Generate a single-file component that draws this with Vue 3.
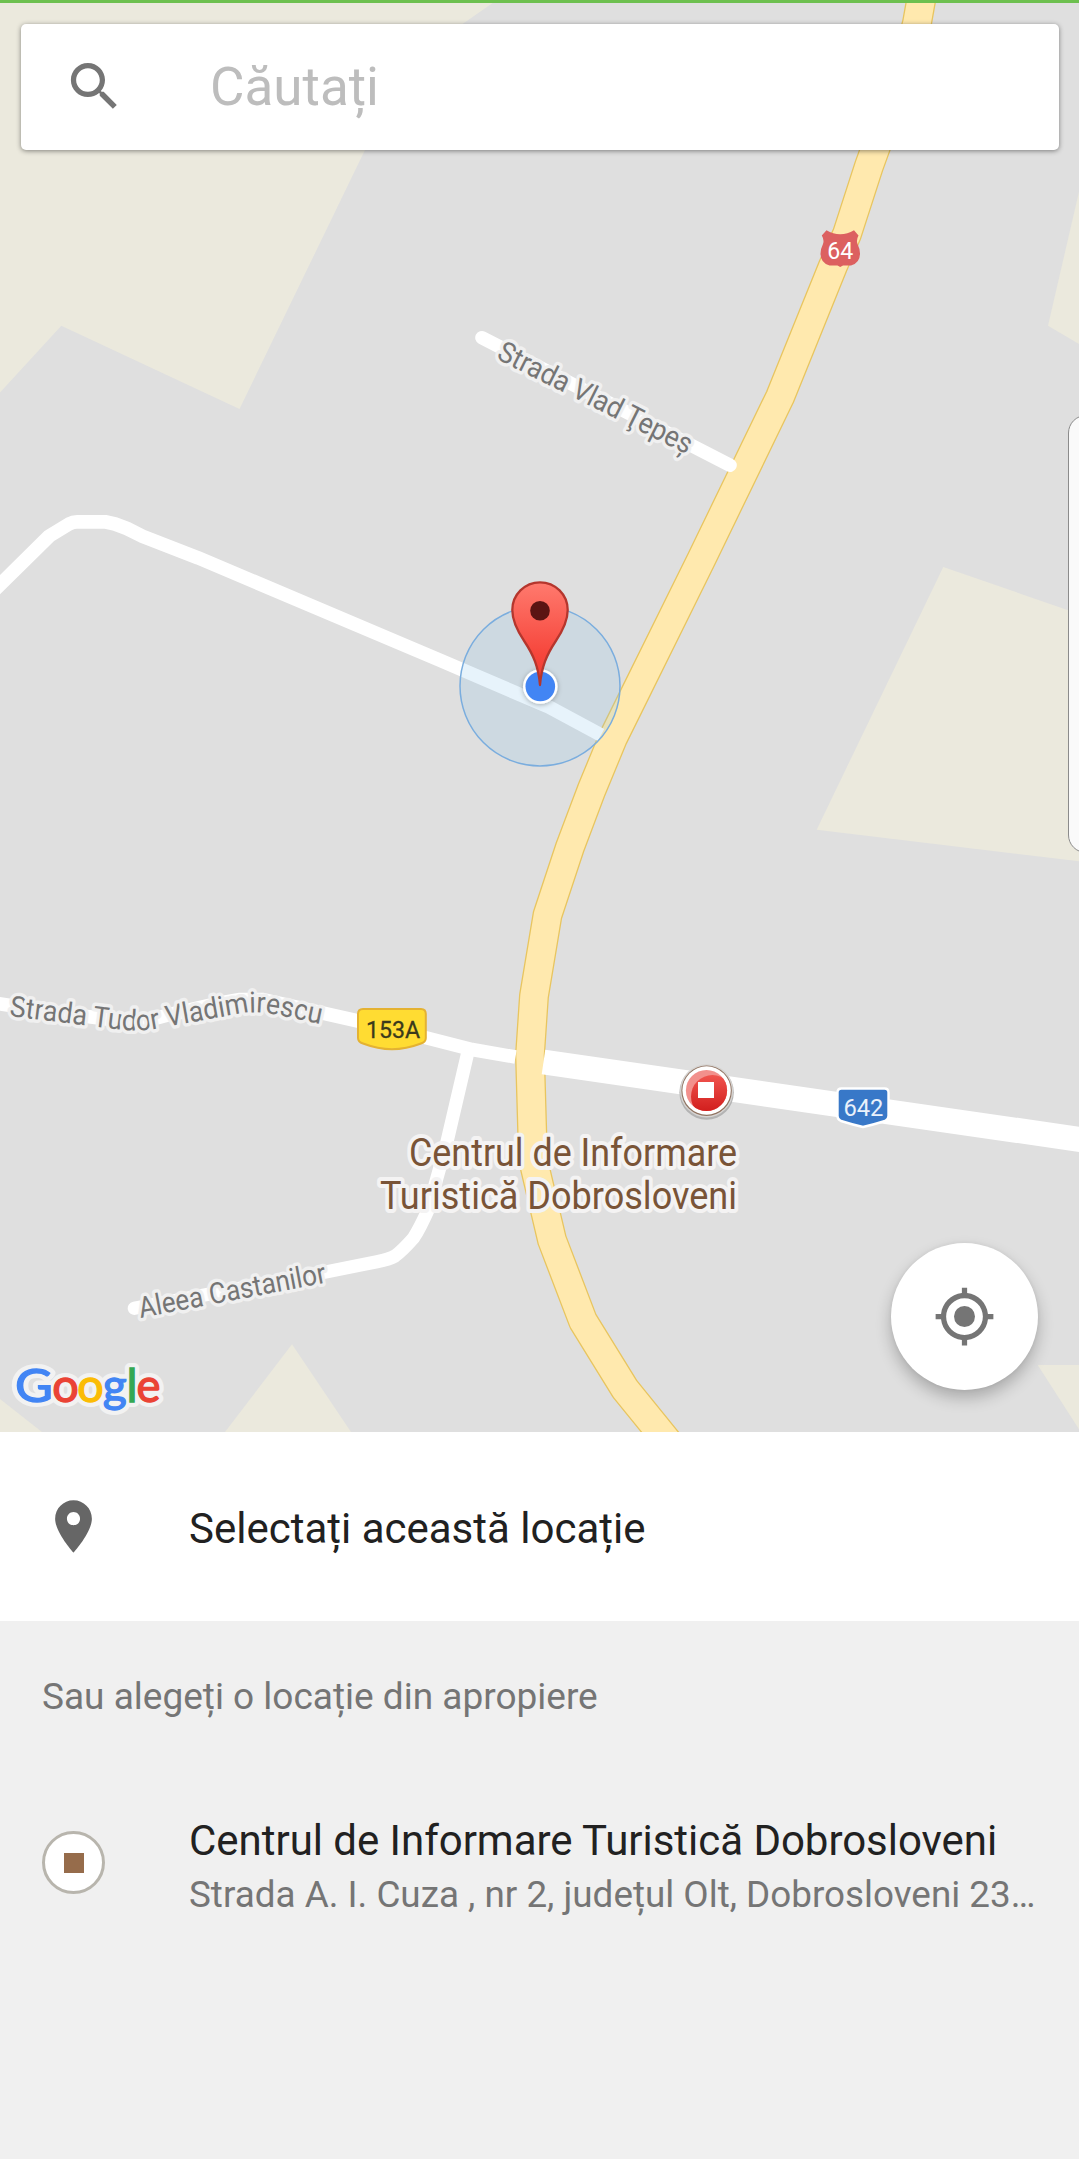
<script setup>
const fields = [
  '0,0 497,0 407.5,62.3 239.5,409 61.3,325.7 0,392.6',
  '1079,191.7 1048,325.7 1079,344',
  '943.3,567 1079,614 1079,861.3 816.7,829.7',
  '1037.7,1365 1079,1365 1079,1429.3',
  '292,1344.3 225,1432 351,1432',
  '0,1399 42,1432 0,1432',
]
const mainRoad =
  'M922 -5 L917 23 L908 58 L869 166 L847 234 L833 266 L780 397 L701 560 L613 738 L591.5 790 L570 847 L547.5 915 L534 996 L530 1055 L532.3 1135 L535 1168 L552 1240 L583 1321 L625 1389 L668 1442'
const streets = [
  { d: 'M482 337.7 L730 465.2', w: 13.6, round: true },
  { d: 'M-10 594.5 L49.3 536 L69 524 Q73 521.8 77 521.8 H105 L115 524 L127 528.5 L142.7 536.3 L198 557.8 L440 660.3 L549 707 L601 735', w: 13.7 },
  { d: 'M-5 1003 L60 1013 L138 1023 L168 1015 L220 1003 L240 999.5 H262 L358 1021 L427 1038 L472 1049.5 L515.5 1057', w: 13.6 },
  { d: 'M134.3 1308.3 L327 1271.7 L377 1261.7 Q390 1259 395 1256 Q402 1251 413.5 1238 Q420 1228 428 1210 L446.7 1143 L467.7 1053', w: 13.2, round: true },
  { d: 'M543.5 1062 L1085 1140.2', w: 25 },
]
const logo = [
  { c: 'G', x: 15, w: 38, fill: '#4285f4' },
  { c: 'o', x: 52.2, w: 26.5, fill: '#ea4335' },
  { c: 'o', x: 77.2, w: 26.5, fill: '#fbbc05' },
  { c: 'g', x: 102.8, w: 24, fill: '#4285f4' },
  { c: 'l', x: 126.500, w: 11, fill: '#34a853' },
  { c: 'e', x: 136.600, w: 24, fill: '#ea4335' },
]
</script>

<template>
  <div class="screen">
    <section class="map">
      <svg class="canvas" width="1079" height="1432" viewBox="0 0 1079 1432">
        <defs>
          <linearGradient id="pinFill" x1="0" y1="0" x2="0" y2="1">
            <stop offset="0" stop-color="#ff7a6e" />
            <stop offset="0.7" stop-color="#f6463c" />
            <stop offset="1" stop-color="#f03a30" />
          </linearGradient>
          <linearGradient id="poiFill" x1="0" y1="0" x2="0" y2="1">
            <stop offset="0" stop-color="#f0544e" />
            <stop offset="1" stop-color="#cc1414" />
          </linearGradient>
          <clipPath id="poiClip"><circle cx="706.5" cy="1090.5" r="20.6" /></clipPath>
          <filter id="dotShadow" x="-50%" y="-50%" width="200%" height="200%">
            <feDropShadow dx="0" dy="1" stdDeviation="2.5" flood-opacity="0.3" />
          </filter>
          <path id="tudorPath" d="M9 1016 L118 1029.500 Q138 1032 158 1028.300 L236 1014.200 Q256 1010.500 276 1014.600 L345 1029" />
        </defs>

        <rect width="1079" height="1432" fill="#dfdfdf" />
        <polygon v-for="p in fields" :key="p" :points="p" fill="#ebe9dd" />

        <path :d="mainRoad" class="road" stroke="#e8c55f" stroke-width="30" />
        <path :d="mainRoad" class="road" stroke="#ffe9ae" stroke-width="27.4" />
        <path
          v-for="s in streets" :key="s.d" :d="s.d" class="road" stroke="#fff"
          :stroke-width="s.w" :stroke-linecap="s.round ? 'round' : 'butt'"
        />

        <g class="street">
          <text transform="translate(495.5 358.3) rotate(26.7)" textLength="214" lengthAdjust="spacingAndGlyphs">Strada Vlad Ţepeș</text>
          <text transform="translate(140.5 1318) rotate(-10.8)" textLength="190" lengthAdjust="spacingAndGlyphs">Aleea Castanilor</text>
          <text textLength="315" lengthAdjust="spacingAndGlyphs"><textPath href="#tudorPath">Strada Tudor Vladimirescu</textPath></text>
        </g>

        <path d="M826.5 230.3 Q833 234.3 840.2 234.3 Q847.500 234.3 854 230.300 L858.5 235.5 Q856 240 857.5 244 Q860 249 860 253.500 Q860 263 851 265.500 L843 265.600 L840.2 267 L837.500 265.600 L829.500 265.500 Q820.500 263 820.500 253.500 Q820.500 249 823 244 Q824.500 240 821.800 235.500 Z" fill="#dc6060" />
        <text class="shield" x="840.3" y="258.5" fill="#fff" textLength="26" lengthAdjust="spacingAndGlyphs">64</text>

        <path d="M363 1009 H421 Q425.800 1009 425.800 1014 V1038 Q425.800 1042 421 1043.500 Q406 1049.200 392 1049.200 Q378 1049.200 363 1043.500 Q358 1042 358 1038 V1014 Q358 1009 363 1009 Z" fill="#ffdc32" stroke="#e4b232" stroke-width="2" />
        <text class="shield bold" x="393" y="1037.7" fill="#3a3a1c" textLength="54" lengthAdjust="spacingAndGlyphs">153A</text>

        <path d="M841.500 1088.500 H884.500 Q888.500 1088.500 888.500 1092.500 V1116 Q888.500 1119.500 885 1121 Q874 1124.500 863 1127 Q852 1124.500 841 1121 Q837.500 1119.500 837.500 1116 V1092.500 Q837.500 1088.500 841.500 1088.500 Z" fill="#3878c8" stroke="#fff" stroke-width="2.4" />
        <text class="shield" x="863.4" y="1116.3" fill="#e9f1fb" textLength="40" lengthAdjust="spacingAndGlyphs">642</text>

        <circle cx="706.6" cy="1092.5" r="27.2" fill="#b3b3b3" />
        <circle cx="706.6" cy="1090.8" r="26.6" fill="#d6d4d2" />
        <circle cx="706.6" cy="1090.8" r="25.2" fill="#8f7260" />
        <circle cx="706.6" cy="1090.5" r="24.2" fill="#fff" />
        <circle cx="706.5" cy="1090.5" r="20.6" fill="#f2908c" />
        <circle cx="712.5" cy="1096.5" r="21.5" fill="url(#poiFill)" clip-path="url(#poiClip)" />
        <rect x="698" y="1082" width="16" height="16" fill="#fff" />

        <g class="poi">
          <text x="409" y="1166" textLength="328" lengthAdjust="spacingAndGlyphs">Centrul de Informare</text>
          <text x="380" y="1209" textLength="357" lengthAdjust="spacingAndGlyphs">Turistică Dobrosloveni</text>
        </g>

        <circle cx="540" cy="686" r="80" fill="rgba(133,193,233,0.2)" stroke="#7aadde" stroke-width="1.5" />
        <circle cx="540.3" cy="686.5" r="17.3" fill="#fff" filter="url(#dotShadow)" />
        <circle cx="540.3" cy="686.5" r="14.800" fill="#4285f4" />
        <path d="M540 685 C538.500 667 533.500 655 524.500 641.500 C517 630.500 512.300 621 512.300 610 A27.700 27.700 0 0 1 567.700 610 C567.700 621 563 630.500 555.500 641.500 C546.500 655 541.500 667 540 685 Z" fill="url(#pinFill)" stroke="#b5362d" stroke-width="2.300" stroke-linejoin="round" />
        <circle cx="540" cy="610.800" r="9.800" fill="#5b1413" />

        <g class="logo">
          <text v-for="l in logo" :key="'h' + l.x" :x="l.x" y="1401.500" :textLength="l.w" lengthAdjust="spacingAndGlyphs" class="halo" aria-hidden="true">{{ l.c }}</text>
          <text v-for="l in logo" :key="l.x" :x="l.x" y="1401.500" :textLength="l.w" lengthAdjust="spacingAndGlyphs" :fill="l.fill" :stroke="l.fill" stroke-width="1.300">{{ l.c }}</text>
        </g>
      </svg>

      <div class="statusline"></div>
      <div class="search">
        <svg width="63" height="63" viewBox="0 0 24 24" fill="#757575">
          <path d="M15.5 14h-.79l-.28-.27C15.41 12.59 16 11.11 16 9.500 16 5.910 13.090 3 9.500 3S3 5.910 3 9.500 5.910 16 9.500 16c1.610 0 3.090-.59 4.230-1.570l.27.28v.79l5 4.990L20.490 19l-4.990-5zm-6 0C7.010 14 5 11.990 5 9.500S7.010 5 9.500 5 14 7.010 14 9.500 11.990 14 9.500 14z" />
        </svg>
        <span>Căutați</span>
      </div>
      <div class="handle"></div>
      <div class="locate">
        <svg width="63" height="63" viewBox="0 0 24 24" fill="#757575">
          <path d="M13 3.060V1h-2v2.060C6.830 3.520 3.520 6.830 3.060 11H1v2h2.060c.46 4.170 3.770 7.480 7.940 7.940V23h2v-2.060c4.170-.46 7.480-3.770 7.940-7.940H23v-2h-2.060c-.46-4.170-3.770-7.480-7.940-7.940zM12 19c-3.870 0-7-3.130-7-7s3.130-7 7-7 7 3.130 7 7-3.130 7-7 7z" />
          <circle cx="12" cy="12" r="4" />
        </svg>
      </div>
    </section>

    <section class="select">
      <svg width="63" height="63" viewBox="0 0 24 24" fill="#666">
        <path d="M12 2C8.130 2 5 5.130 5 9c0 5.250 7 13 7 13s7-7.750 7-13c0-3.870-3.130-7-7-7zm0 9.500c-1.380 0-2.500-1.120-2.500-2.500s1.120-2.500 2.500-2.500 2.500 1.120 2.500 2.500-1.120 2.500-2.500 2.500z" />
      </svg>
      <span>Selectați această locație</span>
    </section>

    <section class="nearby">
      <h2>Sau alegeți o locație din apropiere</h2>
      <div class="place">
        <div class="badge"><i></i></div>
        <div class="info">
          <div class="title">Centrul de Informare Turistică Dobrosloveni</div>
          <div class="address">Strada A. I. Cuza , nr 2, județul Olt, Dobrosloveni 23…</div>
        </div>
      </div>
    </section>
  </div>
</template>

<style>
body {
  margin: 0;
  background: #f0f0f0;
}
</style>

<style scoped>
.screen {
  width: 1079px;
  height: 2159px;
  display: flex;
  flex-direction: column;
  overflow: hidden;
  background: #f0f0f0;
  font-family: Roboto, "Noto Sans", sans-serif;
}
.map {
  position: relative;
  flex: none;
  height: 1432px;
  overflow: hidden;
}
.canvas {
  display: block;
}
.road {
  fill: none;
  stroke-linejoin: round;
}
.street text {
  font-size: 29px;
  fill: #757575;
  stroke: #f0f0f0;
  stroke-width: 7px;
  stroke-linejoin: round;
  paint-order: stroke;
}
.poi text {
  font-size: 38px;
  fill: #795437;
  stroke: #f4f3f3;
  stroke-width: 8px;
  stroke-linejoin: round;
  paint-order: stroke;
}
.shield {
  font-size: 24px;
  text-anchor: middle;
}
.bold {
  stroke: #3a3a1c;
  stroke-width: 0.3px;
}
.logo text {
  font-family: Lato, sans-serif;
  font-size: 46px;
}
.logo .halo {
  fill: #f2f2f2;
  stroke: #f2f2f2;
  stroke-width: 10px;
  stroke-linejoin: round;
}
.statusline {
  position: absolute;
  top: 0;
  left: 0;
  right: 0;
  height: 3px;
  background: #6dc04f;
}
.search {
  position: absolute;
  top: 24px;
  left: 21px;
  width: 1038px;
  height: 126px;
  box-sizing: border-box;
  padding-left: 42px;
  display: flex;
  align-items: center;
  gap: 84px;
  border-radius: 5px;
  background: #fff;
  box-shadow: 0 1px 5px rgba(0, 0, 0, 0.45);
  font-size: 53px;
  color: #bdbdbd;
}
.search svg {
  margin-top: -1px;
}
.handle {
  position: absolute;
  top: 415px;
  right: -30px;
  width: 41px;
  height: 438px;
  box-sizing: border-box;
  border: 1.500px solid #8b8b8b;
  border-radius: 18px;
  background: #fafafa;
}
.locate {
  position: absolute;
  left: 891px;
  top: 1243px;
  width: 147px;
  height: 147px;
  border-radius: 50%;
  display: flex;
  align-items: center;
  justify-content: center;
  background: #fff;
  box-shadow: 0 8px 16px rgba(0, 0, 0, 0.24), 0 0 4px rgba(0, 0, 0, 0.06);
}
.select {
  flex: none;
  height: 189px;
  box-sizing: border-box;
  padding-left: 42px;
  display: flex;
  align-items: center;
  gap: 84px;
  background: #fff;
  font-size: 42px;
  color: #212121;
}
.select span {
  padding-top: 4px;
}
h2 {
  margin: 0;
  padding-left: 42px;
  height: 150px;
  line-height: 152px;
  font-size: 37px;
  font-weight: 400;
  color: #757575;
}
.place {
  display: flex;
  padding: 44px 42px 0;
  gap: 84px;
}
.badge {
  flex: none;
  width: 63px;
  height: 63px;
  margin-top: 16px;
  box-sizing: border-box;
  border: 3px solid #b8b5ad;
  border-radius: 50%;
  display: flex;
  align-items: center;
  justify-content: center;
  background: #fff;
}
.badge i {
  width: 20px;
  height: 20px;
  background: #966c4b;
}
.info {
  padding-top: 1px;
  white-space: nowrap;
}
.title {
  height: 54px;
  line-height: 50px;
  font-size: 42px;
  letter-spacing: -0.03px;
  color: #212121;
}
.address {
  line-height: 50px;
  font-size: 36.85px;
  color: #757575;
}
</style>
